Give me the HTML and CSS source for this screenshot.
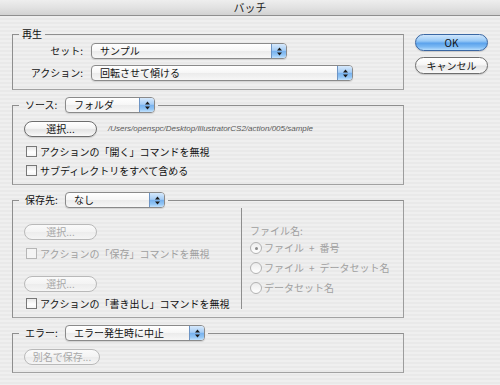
FILE: index.html
```html
<!DOCTYPE html>
<html lang="ja">
<head>
<meta charset="utf-8">
<title>バッチ</title>
<link rel="stylesheet" href="styles.css">
</head>
<body>
<div class="window">
  <div class="titlebar">バッチ</div>
  <div class="content">
    <div class="groups">
      <fieldset class="group">
        <legend class="legend">再生</legend>
        <div class="body body-play">
          <div class="form-row">
            <span class="row-label">セット:</span>
            <div class="popup w-set"><span class="popup-text">サンプル</span><span class="popup-arrows"><svg width="5" height="9" viewBox="0 0 5 9"><path d="M2.5 0.5L5 3.5H0z M0 5.5H5L2.5 8.5z" fill="#1a1a1a"/></svg></span></div>
          </div>
          <div class="form-row">
            <span class="row-label">アクション:</span>
            <div class="popup w-action"><span class="popup-text">回転させて傾ける</span><span class="popup-arrows"><svg width="5" height="9" viewBox="0 0 5 9"><path d="M2.5 0.5L5 3.5H0z M0 5.5H5L2.5 8.5z" fill="#1a1a1a"/></svg></span></div>
          </div>
        </div>
      </fieldset>

      <fieldset class="group group-next">
        <legend class="legend legend-popup">
          <span class="legend-label">ソース:</span>
          <div class="popup w-source"><span class="popup-text">フォルダ</span><span class="popup-arrows"><svg width="5" height="9" viewBox="0 0 5 9"><path d="M2.5 0.5L5 3.5H0z M0 5.5H5L2.5 8.5z" fill="#1a1a1a"/></svg></span></div>
        </legend>
        <div class="body body-source">
          <div class="select-row">
            <button class="btn w-choose">選択...</button>
            <span class="path">/Users/openspc/Desktop/IllustratorCS2/action/005/sample</span>
          </div>
          <div class="check-row first"><span class="checkbox"></span>アクションの「開く」コマンドを無視</div>
          <div class="check-row"><span class="checkbox"></span>サブディレクトリをすべて含める</div>
        </div>
      </fieldset>

      <fieldset class="group group-next">
        <legend class="legend legend-popup">
          <span class="legend-label">保存先:</span>
          <div class="popup w-dest"><span class="popup-text">なし</span><span class="popup-arrows"><svg width="5" height="9" viewBox="0 0 5 9"><path d="M2.5 0.5L5 3.5H0z M0 5.5H5L2.5 8.5z" fill="#1a1a1a"/></svg></span></div>
        </legend>
        <div class="body body-dest">
          <div class="dest-left">
            <button class="btn w-choose" disabled>選択...</button>
            <div class="check-row disabled after-btn"><span class="checkbox"></span>アクションの「保存」コマンドを無視</div>
            <button class="btn w-choose second-btn" disabled>選択...</button>
            <div class="check-row after-btn2"><span class="checkbox"></span>アクションの「書き出し」コマンドを無視</div>
          </div>
          <div class="dest-right">
            <div class="fname-label">ファイル名:</div>
            <div class="radio-row"><span class="radio checked"></span>ファイル<span class="plus">+</span>番号</div>
            <div class="radio-row"><span class="radio"></span>ファイル<span class="plus">+</span>データセット名</div>
            <div class="radio-row"><span class="radio"></span>データセット名</div>
          </div>
        </div>
      </fieldset>

      <fieldset class="group group-next">
        <legend class="legend legend-popup">
          <span class="legend-label">エラー:</span>
          <div class="popup w-error"><span class="popup-text">エラー発生時に中止</span><span class="popup-arrows"><svg width="5" height="9" viewBox="0 0 5 9"><path d="M2.5 0.5L5 3.5H0z M0 5.5H5L2.5 8.5z" fill="#1a1a1a"/></svg></span></div>
        </legend>
        <div class="body body-error">
          <button class="btn w-saveas" disabled>別名で保存...</button>
        </div>
      </fieldset>
    </div>

    <div class="side-buttons">
      <button class="btn btn-side btn-default">OK</button>
      <button class="btn btn-side btn-cancel">キャンセル</button>
    </div>
  </div>
</div>
</body>
</html>
```

FILE: styles.css
```css
* { box-sizing: border-box; }

html, body {
  margin: 0;
  padding: 0;
}

body {
  width: 500px;
  height: 385px;
  overflow: hidden;
  font-family: "Noto Sans CJK JP", "Noto Sans", sans-serif;
  font-size: 10px;
  line-height: 14px;
  color: #111;
  background: repeating-linear-gradient(to bottom, #efefef 0px, #efefef 2px, #e9e9e9 2px, #e9e9e9 4px);
}

.window {
  width: 500px;
  height: 385px;
  display: flex;
  flex-direction: column;
}

.titlebar {
  height: 16px;
  flex: none;
  text-align: center;
  font-size: 11px;
  line-height: 15px;
  color: #222;
  background: linear-gradient(to bottom, #eeeeee 0%, #e2e2e2 50%, #d2d2d2 100%);
  border-bottom: 1px solid #8f8f8f;
}

.content {
  display: flex;
  padding: 11px 0 0 12px;
}

.groups {
  width: 392px;
  display: flex;
  flex-direction: column;
}

.group {
  margin: 0;
  padding: 0;
  border: 1px solid #8e8e8e;
  border-right-color: #9c9c9c;
  border-bottom-color: #a2a2a2;
  min-width: 0;
}

.group-next { margin-top: 7px; }

.legend {
  margin-left: 6px;
  padding: 0 3px;
  line-height: 14px;
}

.legend-popup {
  display: flex;
  align-items: center;
  gap: 4px;
}

.legend-label {
  width: 39px;
  padding-left: 3px;
}

/* popup menus */
.popup {
  height: 16px;
  display: flex;
  align-items: stretch;
  border: 1px solid #8a8a8a;
  border-radius: 4px;
  background: linear-gradient(to bottom, #ffffff 0%, #f6f6f6 50%, #ebebeb 51%, #f7f7f7 100%);
  overflow: hidden;
  box-shadow: 0 1px 1px rgba(0,0,0,0.12);
}

.popup-text {
  flex: 1;
  padding-left: 8px;
  line-height: 14px;
  white-space: nowrap;
}

.popup-arrows {
  width: 15px;
  display: flex;
  align-items: center;
  justify-content: center;
  border-left: 1px solid #6d94c4;
  background: linear-gradient(to bottom, #d6e9fc 0%, #a6cdf5 45%, #78b2ee 52%, #93c6f5 80%, #c3e2fd 100%);
}

.w-set { width: 196px; }
.w-action { width: 262px; }
.w-source { width: 90px; }
.w-dest { width: 100px; }
.w-error { width: 140px; }

/* group bodies */
.body-play {
  padding: 2px 0 8px 0;
  display: flex;
  flex-direction: column;
  gap: 6px;
}

.form-row {
  display: flex;
  align-items: center;
}

.row-label {
  width: 70px;
  margin-right: 8px;
  text-align: right;
}

.body-source {
  padding: 8px 0 4px 11px;
}

.select-row {
  display: flex;
  align-items: center;
}

.path {
  margin-left: 11px;
  font-family: "Liberation Sans", sans-serif;
  font-style: italic;
  font-size: 8px;
  color: #5a5a5a;
}

.check-row {
  height: 19px;
  display: flex;
  align-items: center;
  white-space: nowrap;
}

.check-row.first { margin-top: 5px; }

.checkbox {
  width: 11px;
  height: 11px;
  margin: 0 3px 0 2px;
  border: 1px solid #777;
  background: linear-gradient(to bottom, #e8e8e8 0%, #ffffff 60%, #f4f4f4 100%);
  flex: none;
}

.check-row.disabled { color: #a0a0a0; }
.check-row.disabled .checkbox { border-color: #b6b6b6; background: #f4f4f4; }

.body-dest {
  display: flex;
  align-items: flex-start;
  padding: 0 0 4px 11px;
}

.dest-left {
  width: 217px;
  padding-top: 16px;
  display: flex;
  flex-direction: column;
  align-items: flex-start;
}

.after-btn { margin-top: 4px; }
.second-btn { margin-top: 13px; }
.after-btn2 { margin-top: 2px; }

.dest-right {
  height: 101px;
  border-left: 1px solid #8e8e8e;
  padding: 16px 0 0 8px;
  color: #a0a0a0;
}

.fname-label {
  height: 14px;
}

.radio-row {
  height: 20px;
  display: flex;
  align-items: center;
  white-space: nowrap;
}

.plus {
  margin: 0 5px;
}

.radio {
  width: 12px;
  height: 12px;
  margin-right: 2px;
  border-radius: 50%;
  border: 1px solid #b3b3b3;
  background: linear-gradient(to bottom, #ececec, #ffffff);
  display: flex;
  align-items: center;
  justify-content: center;
  flex: none;
}

.radio.checked::after {
  content: "";
  width: 3px;
  height: 3px;
  border-radius: 50%;
  background: #8a8a8a;
}

.body-error {
  padding: 8px 0 7px 11px;
}

/* push buttons */
.btn {
  height: 16px;
  padding: 0;
  font-family: inherit;
  font-size: 10px;
  line-height: 14px;
  color: #111;
  border: 1px solid #6e6e6e;
  border-radius: 8px;
  background: linear-gradient(to bottom, #ffffff 0%, #f5f5f5 45%, #e4e4e4 55%, #f2f2f2 85%, #fbfbfb 100%);
  box-shadow: 0 1px 1px rgba(0,0,0,0.15);
  text-align: center;
  flex: none;
}

.btn:disabled {
  color: #a8a8a8;
  border-color: #b9b9b9;
  background: linear-gradient(to bottom, #fafafa 0%, #f3f3f3 50%, #ececec 51%, #f5f5f5 100%);
  box-shadow: none;
}

.w-choose { width: 73px; }
.w-saveas { width: 76px; }

.side-buttons {
  margin-left: 11px;
  padding-top: 7px;
  width: 73px;
  display: flex;
  flex-direction: column;
  gap: 6px;
}

.btn-side {
  width: 73px;
  height: 17px;
  border-radius: 9px;
}

.btn-default {
  border-color: #3a67a3;
  background: linear-gradient(to bottom, #cfe6fc 0%, #98c9f6 40%, #5ca3ec 55%, #7dbaf3 80%, #b8defd 100%);
}
```
